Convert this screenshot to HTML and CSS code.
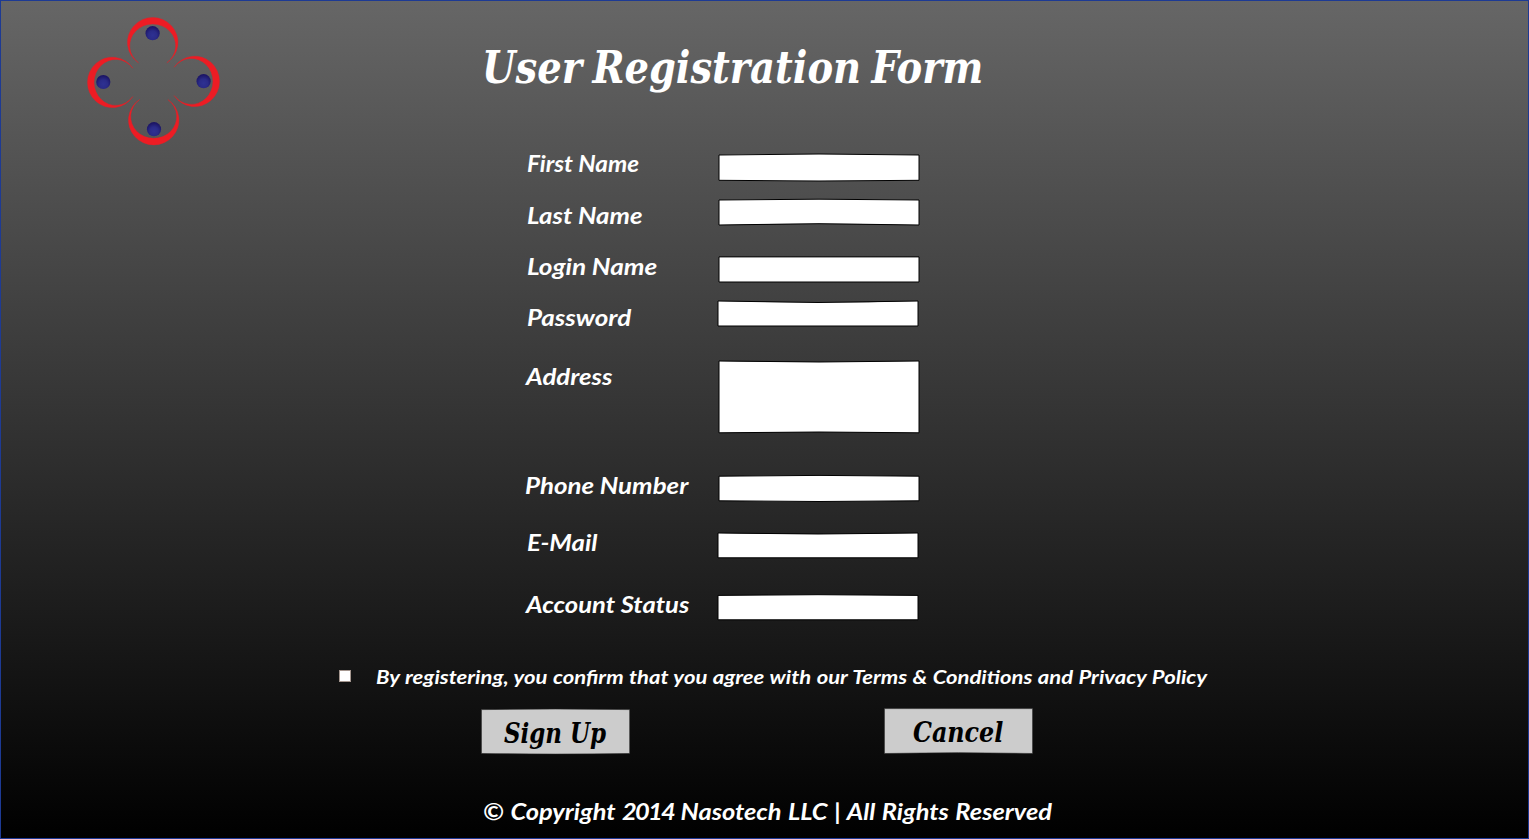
FILE: index.html
```html
<!DOCTYPE html>
<html lang="en">
<head>
<meta charset="utf-8">
<title>User Registration Form</title>
<link rel="stylesheet" href="styles.css">
</head>
<body>
<main class="page">
  <header class="header">
    <svg class="logo" width="140" height="136" viewBox="84 14 140 136">
      <defs>
        <radialGradient id="ball" cx="0.5" cy="0.65" r="0.6">
          <stop offset="0" stop-color="#2e3192"/>
          <stop offset="0.5" stop-color="#2a2b88"/>
          <stop offset="1" stop-color="#1b1464"/>
        </radialGradient>
        <path id="petal" d="M-14.2 45.4A25.2 24.8 0 1 1 14.2 45.4A23 21.7 0 1 0 -14.2 45.4Z" fill="#ed1c24" stroke="#ed1c24" stroke-width=".4"/>
      </defs>
      <use href="#petal" transform="translate(152.7 17.4)"/>
      <use href="#petal" transform="translate(87.4 82.4) rotate(-90)"/>
      <use href="#petal" transform="translate(219.6 81.4) rotate(90)"/>
      <use href="#petal" transform="translate(153.7 145) rotate(180)"/>
      <g fill="url(#ball)">
        <circle cx="152.6" cy="33.2" r="7.1"/>
        <circle cx="103.3" cy="82" r="7.1"/>
        <circle cx="203.6" cy="81.2" r="7.1"/>
        <circle cx="154" cy="129.2" r="7.1"/>
      </g>
    </svg>
    <h1 class="title">User Registration Form</h1>
  </header>

  <form class="form">
    <div class="row first"><label class="label">First Name</label>
      <svg class="field" width="204" height="30" viewBox="717 153 204 30"><path d="M719 155Q819 153 919 155V180.3Q819 181.7 719 180.3Z"/></svg></div>
    <div class="row last"><label class="label">Last Name</label>
      <svg class="field" width="204" height="30" viewBox="717 198 204 30"><path d="M719 200Q819 198.4 919 200V225Q819 222.4 719 225Z"/></svg></div>
    <div class="row login"><label class="label">Login Name</label>
      <svg class="field" width="204" height="30" viewBox="717 255 204 30"><path d="M719 256.9H919V282H719Z"/></svg></div>
    <div class="row password"><label class="label">Password</label>
      <svg class="field" width="204" height="30" viewBox="717 299 204 30"><path d="M718 301Q818 304 918 301V326H718Z"/></svg></div>
    <div class="row address"><label class="label">Address</label>
      <svg class="field" width="204" height="76" viewBox="717 359 204 76"><path d="M719 361Q819 363 919 361V432.8Q819 431.2 719 432.8Z"/></svg></div>
    <div class="row phone"><label class="label">Phone Number</label>
      <svg class="field" width="204" height="30" viewBox="717 474 204 30"><path d="M719 476.2Q819 474.6 919 476.2V500.8Q819 502.2 719 500.8Z"/></svg></div>
    <div class="row email"><label class="label">E-Mail</label>
      <svg class="field" width="204" height="30" viewBox="717 531 204 30"><path d="M718 533Q818 535 918 533V557.8H718Z"/></svg></div>
    <div class="row status"><label class="label">Account Status</label>
      <svg class="field" width="204" height="30" viewBox="717 593 204 30"><path d="M718 595.4Q818 594 918 595.4V619.8H718Z"/></svg></div>

    <div class="terms">
      <span class="checkbox"></span>
      <span class="terms-text">By registering, you confirm that you agree with our Terms &amp; Conditions and Privacy Policy</span>
    </div>
    <div class="actions">
      <div class="button sign-up">
        <svg class="plate" width="150" height="48" viewBox="480 707 150 48"><path d="M481.4 709.6Q555.5 708.4 629.7 709.6V753.5Q555.5 754.7 481.4 753.5Z"/></svg>
        <span class="caption">Sign Up</span>
      </div>
      <div class="button cancel">
        <svg class="plate" width="150" height="48" viewBox="883 707 150 48"><path d="M884.4 708.6H1032.6V753.5Q958.5 751.8 884.4 753.5Z"/></svg>
        <span class="caption">Cancel</span>
      </div>
    </div>
  </form>
  <footer class="footer"><span class="copyright">© Copyright <span class="year">2014</span> Nasotech LLC | All Rights Reserved</span></footer>
</main>
</body>
</html>
```

FILE: styles.css
```css
* { box-sizing: border-box; }
body { margin: 0; background: #000; }
.page {
  width: 1529px; height: 839px; overflow: hidden;
  border: 1px solid #1d3a94;
  background: linear-gradient(#666, #000);
  color: #fff;
  font: italic bold 22px/26px Lato, "Open Sans", sans-serif;
  white-space: nowrap;
  display: flex; flex-direction: column;
}
.header { display: flex; height: 151px; flex: none; padding: 13px 0 0 83px; }
.logo { flex: none; display: block; }
.title {
  margin: 24px 0 0 258px; height: 60px;
  font: italic bold 44px/60px "DejaVu Serif Condensed", "DejaVu Serif", serif;
  word-spacing: -3px;
  transform-origin: 0 0; transform: scaleX(.972);
}
.form { display: flex; flex-direction: column; height: 638px; flex: none; }
.row { display: flex; align-items: flex-start; padding-left: 526px; flex: none; }
.label { width: 190px; flex: none; transform-origin: 0 0; transform: scaleX(1.17); }
.field { display: block; flex: none; fill: #fff; stroke: #000; stroke-width: 1; }
.first { height: 46px; }
.first .field { margin-top: 1px; }
.first .label { margin-top: -1px; transform: scaleX(1.104); }
.last { height: 54px; }
.last .label { margin-top: 5px; }
.login { height: 47px; }
.login .label { margin-top: 2px; transform: scaleX(1.188); }
.login .field { margin-top: 3px; }
.password { height: 60px; }
.password .label { margin-top: 6px; transform: scaleX(1.18); }
.address { height: 112px; }
.address .label { margin: 5px 1px 0 -1px; }
.phone { height: 57px; }
.phone .label { margin: 2px 2px 0 -2px; transform: scaleX(1.177); }
.phone .field { margin-top: 3px; }
.email { height: 62px; }
.email .label { margin-top: 2px; }
.email .field { margin-top: 3px; }
.status { height: 75px; }
.status .label { margin: 2px 1px 0 -1px; transform: scaleX(1.162); }
.status .field { margin-top: 3px; }
.terms { display: flex; height: 42px; padding-left: 338px; font-size: 19px; }
.checkbox { width: 12px; height: 12px; margin: 5px 25px 0 0; background: #fff; border: 1px solid #a4968f; }
.terms-text { margin-top: -1px; word-spacing: .5px; transform-origin: 0 0; transform: scaleX(1.16); }
.actions { display: flex; gap: 253px; padding-left: 479px; }
.button { position: relative; width: 150px; height: 48px; display: flex; justify-content: center; color: #000; }
.plate { position: absolute; left: 0; top: 0; fill: #ccc; stroke: #222; stroke-width: .6; }
.caption { position: relative; font: italic bold 27px/48px "DejaVu Serif Condensed", "DejaVu Serif", serif; }
.sign-up .caption { margin-top: 3px; transform: scaleX(.945); }
.cancel .caption { margin-top: 2px; transform: scaleX(.98); }
.footer { padding: 9px 0 0 482px; }
.copyright { display: inline-block; word-spacing: .8px; transform-origin: 0 0; transform: scaleX(1.154); }
.year { letter-spacing: -1.5px; }
```
